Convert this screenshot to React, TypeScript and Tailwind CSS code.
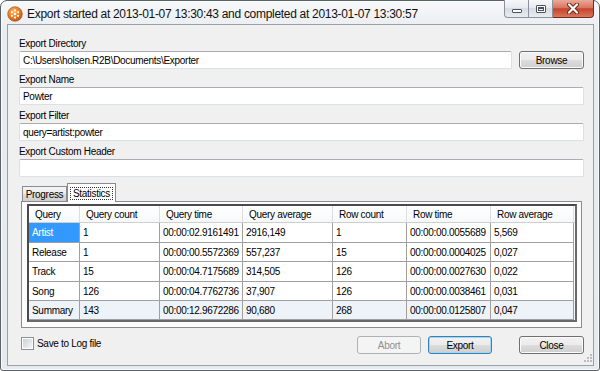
import React from "react";

type Row = {
  cells: string[];
  h: string;
  summary?: boolean;
};

const COLS = ["w-[51px]", "w-[80px]", "w-[83px]", "w-[90px]", "w-[74px]", "w-[84px]", "w-[83px]"];

const HEADERS = ["Query", "Query count", "Query time", "Query average", "Row count", "Row time", "Row average"];

const ROWS: Row[] = [
  { cells: ["Artist", "1", "00:00:02.9161491", "2916,149", "1", "00:00:00.0055689", "5,569"], h: "h-[20px]" },
  { cells: ["Release", "1", "00:00:00.5572369", "557,237", "15", "00:00:00.0004025", "0,027"], h: "h-[19px]" },
  { cells: ["Track", "15", "00:00:04.7175689", "314,505", "126", "00:00:00.0027630", "0,022"], h: "h-[20px]" },
  { cells: ["Song", "126", "00:00:04.7762736", "37,907", "126", "00:00:00.0038461", "0,031"], h: "h-[19px]" },
  { cells: ["Summary", "143", "00:00:12.9672286", "90,680", "268", "00:00:00.0125807", "0,047"], h: "h-[19px]", summary: true },
];

function AppIcon() {
  return (
    <svg width="16" height="16" viewBox="0 0 16 16">
      <defs>
        <radialGradient id="ic" cx="40%" cy="35%" r="70%">
          <stop offset="0" stopColor="#fbb45a" />
          <stop offset="0.6" stopColor="#ea7a22" />
          <stop offset="1" stopColor="#b9520f" />
        </radialGradient>
      </defs>
      <circle cx="8" cy="8" r="7.3" fill="url(#ic)" stroke="#a44a10" strokeWidth="0.6" />
      <g fill="#fff" opacity="0.95">
        <circle cx="8" cy="8" r="1.3" />
        <circle cx="8" cy="4.4" r="1.1" />
        <circle cx="8" cy="11.6" r="1.1" />
        <circle cx="4.9" cy="6.2" r="1.1" />
        <circle cx="11.1" cy="6.2" r="1.1" />
        <circle cx="4.9" cy="9.8" r="1.1" />
        <circle cx="11.1" cy="9.8" r="1.1" />
      </g>
    </svg>
  );
}

function CaptionButtons() {
  return (
    <div className="flex h-[18px]">
      <div className="flex w-[25px] items-end justify-center rounded-bl-[4px] border border-t-0 border-[#8b929b] bg-[linear-gradient(#f6f7f9,#e7eaee_45%,#d6dce3_50%,#e8ecf0)] pb-[4px]">
        <div className="h-[4px] w-[10px] rounded-[1px] border border-[#4b525b] bg-white" />
      </div>
      <div className="flex w-[24px] items-center justify-center border-y border-r border-t-0 border-[#8b929b] bg-[linear-gradient(#f6f7f9,#e7eaee_45%,#d6dce3_50%,#e8ecf0)]">
        <div className="h-[8px] w-[10px] rounded-[1px] border border-[#4b525b] bg-white p-[1px]">
          <div className="h-full w-full border border-t-2 border-[#4b525b] bg-[#f3f3f3]" />
        </div>
      </div>
      <div className="flex w-[41px] items-center justify-center rounded-br-[4px] border-y border-r border-t-0 border-[#7a2a1c] bg-[linear-gradient(#eaa99a,#d87660_45%,#c5432a_52%,#d9775e)]">
        <svg width="12" height="11" viewBox="0 0 12 11">
          <path d="M2 1.5 L10 9.5 M10 1.5 L2 9.5" stroke="#6b2417" strokeWidth="4" strokeLinecap="round" />
          <path d="M2 1.5 L10 9.5 M10 1.5 L2 9.5" stroke="#fff" strokeWidth="2.2" strokeLinecap="round" />
        </svg>
      </div>
    </div>
  );
}

function TextBox({ value, className = "" }: { value?: string; className?: string }) {
  return (
    <div
      className={`flex h-[18px] items-center rounded-[2px] border border-[#dbdfe6] border-t-[#abadb3] bg-white pl-[3px] whitespace-nowrap ${className}`}
    >
      {value}
    </div>
  );
}

function Field({ label, value }: { label: string; value?: string }) {
  return (
    <div className="flex flex-col pb-[4px]">
      <div className="mb-[1px] h-[13px] leading-[13px]">{label}</div>
      <TextBox value={value} />
    </div>
  );
}

function WinButton({ label, className = "", disabled, focused }: { label: string; className?: string; disabled?: boolean; focused?: boolean }) {
  if (disabled) {
    return (
      <div className={`flex h-[18px] items-center justify-center rounded-[3px] border border-[#adb2b5] bg-[#f4f4f4] text-[#8f8f8f] ${className}`}>
        {label}
      </div>
    );
  }
  return (
    <div
      className={`flex h-[18px] items-center justify-center rounded-[3px] border ${
        focused ? "border-[#3c7fb1] shadow-[inset_0_0_0_1px_#9fd8f4]" : "border-[#707070] shadow-[inset_0_0_0_1px_#fbfbfb]"
      } bg-[linear-gradient(#f2f2f2,#ebebeb_50%,#dddddd_50%,#cfcfcf)] ${className}`}
    >
      {label}
    </div>
  );
}

function StatsGrid() {
  return (
    <div className="w-[550px] border-2 border-[#4a4a4a] border-r-[#6a6a6a] border-b-[#6a6a6a] bg-white">
      <div className="flex h-[17px] border-b border-[#cfcfcf] bg-[linear-gradient(#ffffff,#f7f8fa)]">
        {HEADERS.map((h, i) => (
          <div key={h} className={`${COLS[i]} flex items-center border-r border-[#dedede] pl-[6px] whitespace-nowrap`}>
            {h}
          </div>
        ))}
      </div>
      {ROWS.map((r, ri) => (
        <div key={ri} className={`flex ${r.h} ${r.summary ? "bg-[#eef3fa]" : "bg-white"}`}>
          {r.cells.map((c, ci) => {
            const selected = ri === 0 && ci === 0;
            return (
              <div
                key={ci}
                className={`${COLS[ci]} flex items-center border-r border-b border-[#a0a0a0] pl-[3px] whitespace-nowrap ${
                  selected ? "bg-[#3399ff] text-white" : ""
                }`}
              >
                {c}
              </div>
            );
          })}
        </div>
      ))}
    </div>
  );
}

function Grip() {
  return (
    <svg width="10" height="10" viewBox="0 0 10 10" className="self-end">
      <g fill="#b9bcc0">
        <rect x="8" y="0" width="2" height="2" />
        <rect x="5" y="3" width="2" height="2" />
        <rect x="8" y="3" width="2" height="2" />
        <rect x="2" y="6" width="2" height="2" />
        <rect x="5" y="6" width="2" height="2" />
        <rect x="8" y="6" width="2" height="2" />
      </g>
    </svg>
  );
}

export default function App() {
  return (
    <div className="h-[371px] w-[600px] bg-white font-['Liberation_Sans',Arial,sans-serif] text-black">
      <div className="flex h-[371px] w-[600px] flex-col rounded-t-[7px] rounded-b-[3px] border border-[#5b6169] bg-[linear-gradient(#f7f8fa,#e9ecf0_30px,#e6e9ed)] pr-[5px] pb-[4px] pl-[6px] shadow-[inset_0_0_0_1px_#fafbfc]">
        <div className="flex h-[25px] items-start">
          <div className="flex items-center gap-[4px] pt-[5px]">
            <AppIcon />
            <span className="text-[12px] leading-[16px] tracking-[-0.3px] text-[#111]">
              Export started at 2013-01-07 13:30:43 and completed at 2013-01-07 13:30:57
            </span>
          </div>
          <div className="ml-auto -mt-px">
            <CaptionButtons />
          </div>
        </div>

        <div className="flex flex-1 flex-col border border-[#98a0aa] bg-[#f0f0f0] pt-[12px] pr-[9px] pl-[11px] text-[10px] tracking-[-0.3px]">
          <div className="flex flex-col pb-[4px]">
            <div className="mb-[1px] h-[13px] leading-[13px]">Export Directory</div>
            <div className="flex items-center gap-[7px]">
              <TextBox value="C:\Users\holsen.R2B\Documents\Exporter" className="flex-1" />
              <WinButton label="Browse" className="w-[65px]" />
            </div>
          </div>
          <Field label="Export Name" value="Powter" />
          <Field label="Export Filter" value="query=artist:powter" />
          <Field label="Export Custom Header" />

          <div className="mt-[2px] ml-[3px] flex h-[18px] items-end">
            <div className="flex h-[15px] w-[45px] items-center justify-center border border-b-0 border-[#898c95] bg-[linear-gradient(#f3f3f3,#ebebeb_50%,#dddddd_50%,#cfcfcf)]">
              Progress
            </div>
            <div className="relative z-10 -mb-px flex h-[19px] w-[49px] items-center justify-center border border-b-0 border-[#898c95] bg-white">
              <span className="border border-dotted border-[#333] px-[2px] leading-[11px]">Statistics</span>
            </div>
          </div>
          <div className="ml-[2px] w-[561px] border border-[#898c95] bg-[#fcfcfc] pt-[2px] pb-[5px] pl-[5px]">
            <StatsGrid />
          </div>

          <div className="mt-[8px] flex items-start">
            <div className="mt-[1px] ml-[2px] flex h-[13px] w-[13px] items-center justify-center border border-[#8e8f8f] bg-white">
              <div className="h-[9px] w-[9px] bg-[linear-gradient(135deg,#cbcfd5,#f6f6f6)]" />
            </div>
            <span className="ml-[3px] leading-[15px]">Save to Log file</span>
            <div className="ml-auto flex">
              <WinButton label="Abort" disabled className="w-[64px]" />
              <WinButton label="Export" focused className="ml-[7px] w-[64px]" />
              <WinButton label="Close" className="ml-[27px] w-[65px]" />
            </div>
          </div>
          <div className="mt-auto -mr-[9px] flex justify-end pb-[1px] pr-[1px]">
            <Grip />
          </div>
        </div>
      </div>
    </div>
  );
}
